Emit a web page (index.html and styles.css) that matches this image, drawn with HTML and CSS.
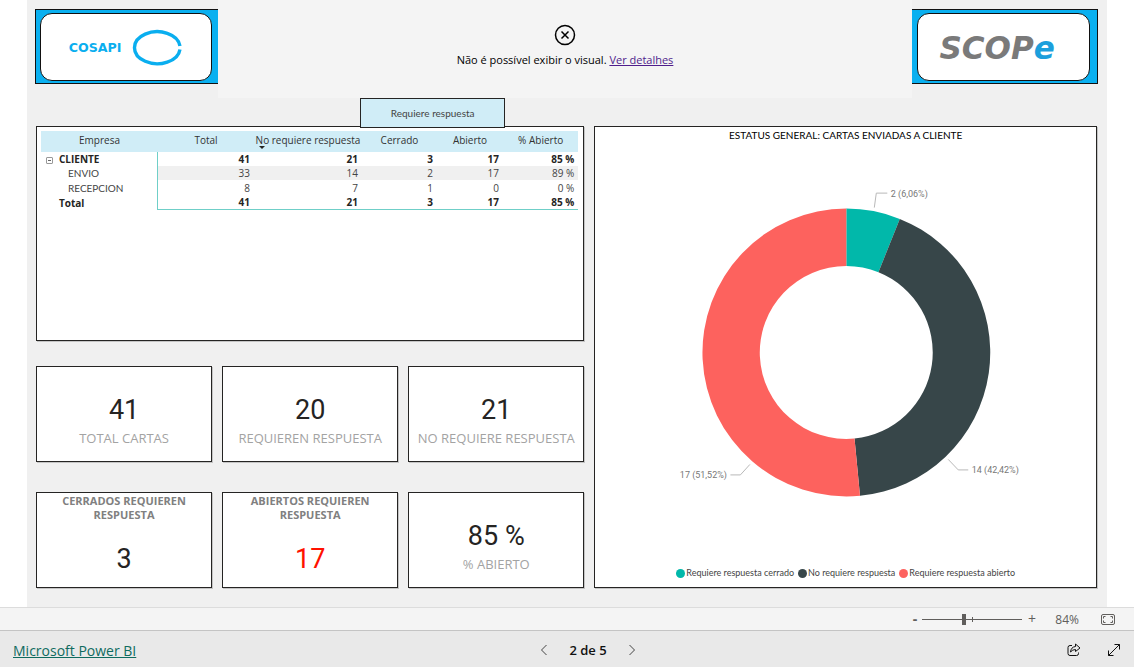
FILE: index.html
```html
<!DOCTYPE html>
<html lang="pt">
<head>
<meta charset="utf-8">
<meta name="viewport" content="width=device-width, initial-scale=1">
<title>Microsoft Power BI</title>
<link rel="stylesheet" href="styles.css">
</head>
<body>
<main class="report">
  <header class="banner">
    <div class="logo logo-left">
      <div class="logo-plate">
        <svg class="logo-art" viewBox="0 0 172 68" role="img" aria-label="COSAPI">
          <text class="cosapi-text" x="27" y="39">COSAPI</text>
          <path class="cosapi-ring" d="M141.600 33A23.500 16.500 0 1 0 141.600 36.500"/>
        </svg>
      </div>
    </div>
    <section class="notice">
      <svg class="notice-icon" viewBox="0 0 22 22" aria-hidden="true"><circle cx="11" cy="11" r="9.500"/><path d="M7.500 7.500l7 7M14.500 7.500l-7 7"/></svg>
      <p class="notice-text">Não é possível exibir o visual. <a class="notice-link" href="#detalhes">Ver detalhes</a></p>
    </section>
    <div class="logo logo-right">
      <div class="logo-plate">
        <svg class="logo-art" viewBox="0 0 172 68" role="img" aria-label="SCOPe">
          <text class="scope-text" x="20" y="46">SCOP<tspan class="scope-e">e</tspan></text>
        </svg>
      </div>
    </div>
  </header>

  <div class="board">
    <div class="column">
      <button class="tab" type="button">Requiere respuesta</button>
      <section class="panel table-panel">
        <table class="matrix">
          <colgroup><col class="c-name"><col class="c-total"><col class="c-noreq"><col class="c-closed"><col class="c-open"><col class="c-pct"></colgroup>
          <thead>
            <tr><th scope="col">Empresa</th><th scope="col">Total</th><th class="sorted" scope="col">No requiere respuesta</th><th scope="col">Cerrado</th><th scope="col">Abierto</th><th scope="col">% Abierto</th></tr>
          </thead>
          <tbody>
            <tr class="strong"><th scope="row"><button class="toggle" type="button" aria-label="Contraer"></button>CLIENTE</th><td>41</td><td>21</td><td>3</td><td>17</td><td>85 %</td></tr>
            <tr class="child shaded"><th scope="row">ENVIO</th><td>33</td><td>14</td><td>2</td><td>17</td><td>89 %</td></tr>
            <tr class="child tall"><th scope="row">RECEPCION</th><td>8</td><td>7</td><td>1</td><td>0</td><td>0 %</td></tr>
            <tr class="strong total"><th scope="row">Total</th><td>41</td><td>21</td><td>3</td><td>17</td><td>85 %</td></tr>
          </tbody>
        </table>
      </section>
      <div class="cards">
        <section class="panel card"><strong class="value">41</strong><span class="caption">TOTAL CARTAS</span></section>
        <section class="panel card"><strong class="value">20</strong><span class="caption">REQUIEREN RESPUESTA</span></section>
        <section class="panel card"><strong class="value">21</strong><span class="caption">NO REQUIERE RESPUESTA</span></section>
        <section class="panel card titled"><h2 class="card-title">CERRADOS REQUIEREN RESPUESTA</h2><strong class="value">3</strong></section>
        <section class="panel card titled"><h2 class="card-title">ABIERTOS REQUIEREN RESPUESTA</h2><strong class="value alert">17</strong></section>
        <section class="panel card"><strong class="value">85 %</strong><span class="caption">% ABIERTO</span></section>
      </div>
    </div>

    <section class="panel chart-panel">
      <h2 class="chart-title">ESTATUS GENERAL: CARTAS ENVIADAS A CLIENTE</h2>
      <svg class="donut" viewBox="0 0 501 420" role="img" aria-label="Estatus general">
        <path class="teal" d="M251.500 65A144 144 0 0 1 305 75.300L283.650 128.700A86.500 86.500 0 0 0 251.500 122.500Z"/>
        <path class="dark" d="M305 75.300A144 144 0 0 1 265.200 352.350L259.700 295.100A86.500 86.500 0 0 0 283.650 128.700Z"/>
        <path class="coral" d="M265.200 352.350A144 144 0 1 1 251.500 65V122.500A86.500 86.500 0 1 0 259.700 295.100Z"/>
        <path class="leader" d="M279.500 64L281.500 49.500H292.500M353.500 316L363.500 326.500H373.500M155 321L145.500 331.500H135.500"/>
        <text class="data-label" x="296" y="53">2 (6,06%)</text>
        <text class="data-label" x="377" y="330">14 (42,42%)</text>
        <text class="data-label end" x="132" y="335">17 (51,52%)</text>
      </svg>
      <ul class="legend">
        <li class="legend-item"><span class="dot dot-teal"></span>Requiere respuesta cerrado</li>
        <li class="legend-item"><span class="dot dot-dark"></span>No requiere respuesta</li>
        <li class="legend-item"><span class="dot dot-coral"></span>Requiere respuesta abierto</li>
      </ul>
    </section>
  </div>
</main>

<div class="zoombar">
  <button class="zoom-step minus" type="button" aria-label="Reducir">-</button>
  <input class="zoom-range" type="range" min="0" max="100" value="42" aria-label="Zoom">
  <button class="zoom-step" type="button" aria-label="Ampliar">+</button>
  <output class="zoom-value">84%</output>
  <button class="icon-button" type="button" aria-label="Ajustar a la página">
    <svg class="fit-icon" viewBox="0 0 14 11"><rect x=".5" y=".5" width="13" height="10" rx="1.500"/><path d="M2.500 4.500v-2h2M9.500 2.500h2v2M11.500 6.500v2h-2M4.500 8.500h-2v-2"/></svg>
  </button>
</div>

<footer class="footer">
  <a class="brand" href="#powerbi">Microsoft Power BI</a>
  <nav class="pager" aria-label="Páginas">
    <button class="icon-button" type="button" aria-label="Anterior"><svg class="chevron" viewBox="0 0 8 12"><path d="M6.500 1l-5 5 5 5"/></svg></button>
    <span class="page-label">2 de 5</span>
    <button class="icon-button" type="button" aria-label="Siguiente"><svg class="chevron" viewBox="0 0 8 12"><path d="M1.500 1l5 5-5 5"/></svg></button>
  </nav>
  <div class="actions">
    <button class="icon-button" type="button" aria-label="Compartir"><svg class="action-icon" viewBox="0 0 14 14"><path d="M5 2.500H3A2 2 0 0 0 1 4.500V10.500A2 2 0 0 0 3 12.500H9.500A2 2 0 0 0 11.500 10.500V9.500M8.500 1L13 5 8.500 8.500V6.500Q5.500 6.500 3.500 9 4 4 8.500 3.500Z"/></svg></button>
    <button class="icon-button" type="button" aria-label="Pantalla completa"><svg class="action-icon" viewBox="0 0 14 14"><path d="M1.500 12.500l11-11M7.500 1.500h5v5M1.500 7.500v5h5"/></svg></button>
  </div>
</footer>
</body>
</html>
```
FILE: styles.css
```css
* { box-sizing: border-box; }
body {
  margin: 0;
  min-height: 100vh;
  display: flex;
  flex-direction: column;
  background: #fff;
  color: #252423;
  font-family: "Open Sans", "Noto Sans", sans-serif;
  font-size: 11px;
}
button { font: inherit; color: inherit; border: 0; padding: 0; background: none; cursor: pointer; }
h2, p, ul { margin: 0; padding: 0; }
svg { display: block; fill: none; }

.report { flex: 1; margin: 0 27px; padding: 0 10px 19px 9px; background: #f0f0f0; }

/* Banner */
.banner { display: flex; align-items: flex-start; margin: 0 -1px; }
.logo { height: 75px; margin-top: 9px; padding: 3px 5px; background: #0ab0f0; border: 1px solid #111; }
.logo-left { flex: 0 0 183px; border-right: 0; padding: 3px 6px 3px 4px; }
.logo-right { flex: 0 0 186px; border-left: 0; padding-right: 7px; }
.logo-plate { height: 68px; background: #fff; border: 1px solid #111; border-radius: 12px; }
.logo-art { width: 100%; height: 100%; }
.cosapi-text { font: bold 13px "DejaVu Sans", sans-serif; fill: #0aaeef; }
.cosapi-ring { stroke: #0aaeef; stroke-width: 3.500; }
.scope-text { font: italic bold 32px "DejaVu Sans", sans-serif; fill: #7a7a7a; }
.scope-e { fill: #1c9fdc; }
.notice {
  flex: 1;
  height: 98px;
  padding-top: 24px;
  display: flex;
  flex-direction: column;
  align-items: center;
  gap: 6px;
  background: #f4f4f4;
  color: #000;
}
.notice-icon { width: 22px; height: 22px; stroke: #000; stroke-width: 1.500; }
.notice-text { font-size: 11px; line-height: 16px; }
.notice-link { color: #4f1d8c; }

/* Board */
.board { display: grid; grid-template-columns: 12fr 11fr; gap: 10px; }
.column { display: flex; flex-direction: column; }
.panel { background: #fff; border: 1px solid #252423; box-shadow: 1px 1px 0 #c4c4c4; }
.tab {
  align-self: center;
  width: 145px;
  height: 30px;
  margin-left: 245px;
  margin-bottom: -2px;
  z-index: 1;
  background: #d0edf7;
  border: 1px solid #252423;
  font-family: Lato, sans-serif;
  font-size: 10px;
  color: #444;
}
.table-panel { flex: 1; min-height: 215px; padding: 4px 5px 3px 4px; }
.matrix { width: 100%; table-layout: fixed; border-collapse: separate; border-spacing: 0; font-size: 10px; line-height: 14px; }
.c-name { width: 117px; }
.c-total { width: 96px; }
.c-noreq { width: 108px; }
.c-closed { width: 75px; }
.c-open { width: 66px; }
.matrix th, .matrix td { padding: 0; font-weight: 400; white-space: nowrap; }
.matrix thead th { height: 21px; padding-bottom: 3px; background: #d0edf7; text-align: center; color: #333; }
.matrix .sorted { position: relative; }
.sorted::after {
  content: "";
  position: absolute;
  left: 5px;
  bottom: 3px;
  border: 3px solid transparent;
  border-top-color: #252423;
  border-bottom: 0;
}
.matrix tbody th { position: relative; text-align: left; padding-left: 18px; border-right: 1px solid #6fcfc8; }
.matrix tbody td { text-align: right; padding-right: 4px; }
.matrix .child th { padding-left: 27px; font-family: Lato, sans-serif; color: #444; }
.matrix .child td { color: #444; }
.matrix .shaded td { background: #f0f0f0; }
.matrix .tall td { height: 15px; }
.matrix .strong th, .matrix .strong td { font-weight: 700; }
.matrix .total td { border-bottom: 1px solid #6fcfc8; }
.toggle { position: absolute; left: 5px; top: 5px; width: 7px; height: 7px; border: 1px solid #999; border-radius: 1px; }
.toggle::after { content: ""; position: absolute; left: 1px; right: 1px; top: 2px; height: 1px; background: #666; }

.cards { display: grid; grid-template-columns: repeat(3, 1fr); gap: 30px 10px; margin-top: 25px; }
.card { height: 96px; display: flex; flex-direction: column; align-items: center; padding-top: 27px; text-align: center; }
.value { font-family: Roboto, sans-serif; font-weight: 400; font-size: 27px; line-height: 32px; }
.alert { color: #f10; }
.caption { font-size: 13px; line-height: 24px; color: #a3a3a3; white-space: nowrap; }
.titled { padding: 1px 16px 0; }
.card-title { font-size: 11px; line-height: 14px; color: #808080; }
.titled .value { margin-top: 21px; }

.chart-panel { margin-top: 28px; display: flex; flex-direction: column; }
.chart-title { font-family: Lato, sans-serif; font-size: 10px; font-weight: 400; line-height: 16px; text-align: center; color: #000; }
.donut { width: 100%; flex: 1; }
.teal { fill: #01b8aa; }
.dark { fill: #374649; }
.coral { fill: #fd625e; }
.leader { stroke: #b8b8b8; }
.data-label { font: 9px Roboto, sans-serif; fill: #777; }
.end { text-anchor: end; }
.legend { display: flex; justify-content: center; gap: 4px; padding-bottom: 5px; list-style: none; font-family: Lato, sans-serif; font-size: 9px; line-height: 18px; color: #444; }
.legend-item { display: flex; align-items: center; gap: 1px; }
.dot { width: 9px; height: 9px; border-radius: 50%; }
.dot-teal { background: #01b8aa; }
.dot-dark { background: #374649; }
.dot-coral { background: #fd625e; }

/* Bottom bars */
.zoombar { height: 23px; display: flex; align-items: center; justify-content: flex-end; padding-right: 19px; background: #f4f4f4; border-top: 1px solid #dcdcdc; color: #605e5c; }
.zoom-step { width: 14px; font-size: 14px; line-height: 20px; }
.minus { width: 8px; font-weight: 700; }
.zoom-range {
  appearance: none;
  width: 100px;
  height: 11px;
  margin: 0 3px;
  background:
    linear-gradient(#605e5c, #605e5c) 50px 50% / 1px 5px no-repeat,
    linear-gradient(#605e5c, #605e5c) 0 50% / 100% 1px no-repeat;
}
.zoom-range::-webkit-slider-thumb { appearance: none; width: 4px; height: 11px; background: #605e5c; }
.zoom-value { width: 40px; margin-right: 22px; text-align: right; font-size: 12px; }
.icon-button { display: flex; align-items: center; justify-content: center; }
.fit-icon { width: 14px; height: 11px; stroke: #605e5c; }
.footer { height: 37px; display: grid; grid-template-columns: 1fr auto 1fr; align-items: center; padding: 2px 13px 0; background: #e9e9e9; border-top: 1px solid #c4c4c4; }
.brand { justify-self: start; font-size: 14px; color: #0f6b5f; }
.pager { display: flex; align-items: center; gap: 21px; margin-left: 42px; }
.page-label { font-size: 13px; font-weight: 600; color: #111; }
.chevron { width: 8px; height: 12px; stroke: #444; }
.actions { justify-self: end; display: flex; gap: 26px; }
.action-icon { width: 14px; height: 14px; stroke: #111; }
```
